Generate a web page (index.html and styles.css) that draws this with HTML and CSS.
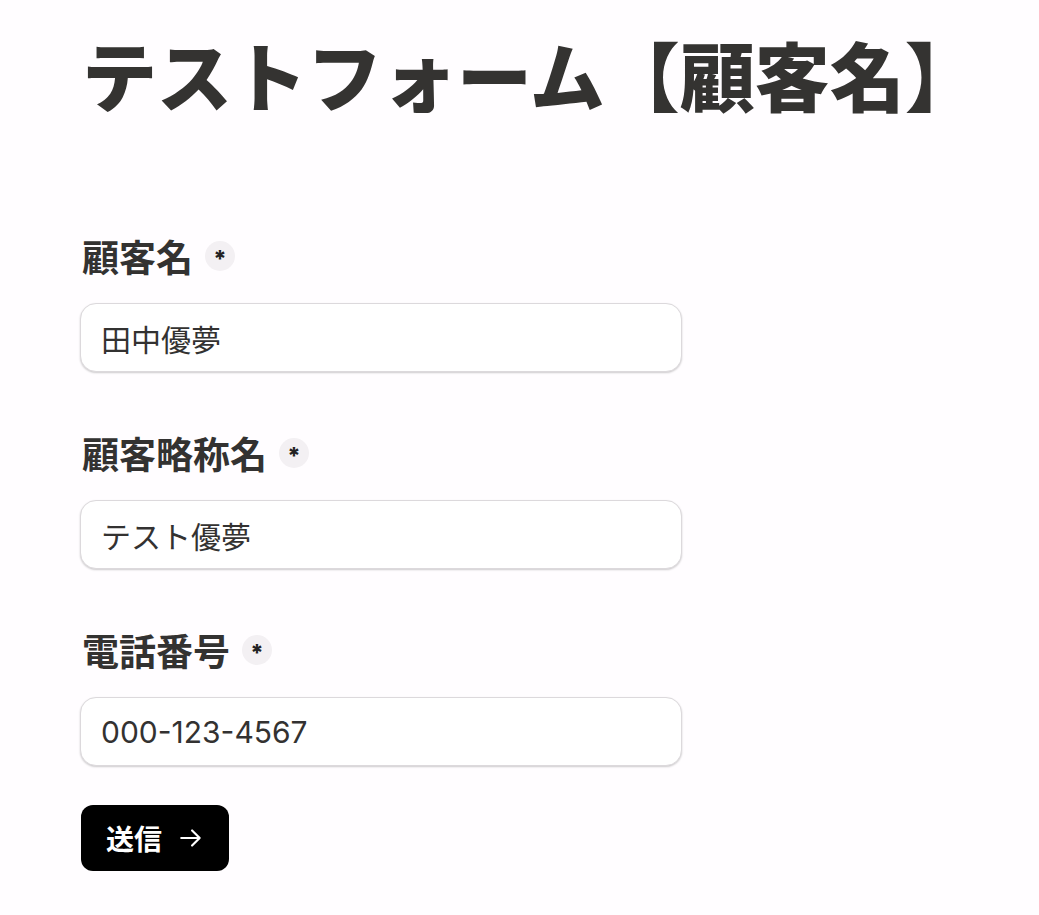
FILE: index.html
```html
<!DOCTYPE html>
<html lang="ja">
<head>
<meta charset="utf-8">
<link rel="stylesheet" href="styles.css">
</head>
<body>
<main class="page">
  <h1 class="title">テストフォーム【顧客名】</h1>
  <form class="form">
    <div class="field">
      <div class="label-row"><span class="label">顧客名</span><span class="req">*</span></div>
      <div class="input">田中優夢</div>
    </div>
    <div class="field">
      <div class="label-row"><span class="label">顧客略称名</span><span class="req">*</span></div>
      <div class="input">テスト優夢</div>
    </div>
    <div class="field">
      <div class="label-row"><span class="label">電話番号</span><span class="req">*</span></div>
      <div class="input">000-123-4567</div>
    </div>
    <button type="button" class="submit">送信
      <svg class="arrow" width="26" height="26" viewBox="0 0 24 24" fill="none" stroke="#fff" stroke-width="2" stroke-linecap="round" stroke-linejoin="round"><path d="M3 12h17M13 5l7 7-7 7"/></svg>
    </button>
  </form>
</main>
</body>
</html>
```
FILE: styles.css
```css
* { box-sizing: border-box; }
html, body { margin: 0; padding: 0; background: #fffdff; }
body {
  font-family: Inter, "Noto Sans CJK JP", sans-serif;
  color: #333231;
}
.page {
  padding: 24px 0 0 80px;
}
.title {
  margin: 0 0 0 2px;
  font-family: "Noto Sans CJK JP", sans-serif;
  font-size: 75px;
  font-weight: 900;
  line-height: 100px;
  color: #343331;
}
.form {
  margin-top: 112px;
  display: flex;
  flex-direction: column;
  width: 602px;
}
.field {
  display: flex;
  flex-direction: column;
  gap: 27px;
  margin-bottom: 61px;
}
.field:last-of-type { margin-bottom: 39px; }
.label-row {
  display: flex;
  align-items: center;
  gap: 12px;
  height: 40px;
  padding-left: 2px;
}
.label {
  font-family: "Noto Sans CJK JP", sans-serif;
  font-weight: 700;
  font-size: 37px;
  line-height: 40px;
  color: #333231;
}
.req {
  width: 30px;
  height: 30px;
  border-radius: 50%;
  background: #f3f0f3;
  display: flex;
  align-items: center;
  justify-content: center;
  font-family: Inter, sans-serif;
  font-weight: 800;
  font-size: 23px;
  line-height: 1;
  padding-top: 7px;
  color: #222;
}
.input {
  height: 69px;
  border: 1px solid #dcd9dc;
  border-radius: 16px;
  background: #fff;
  box-shadow: 0 1px 2px rgba(0,0,0,0.2);
  padding: 0 20px;
  display: flex;
  align-items: center;
  font-size: 30px;
  color: #333231;
}
.submit {
  align-self: flex-start;
  margin-left: 1px;
  width: 148px;
  height: 66px;
  border: none;
  border-radius: 12px;
  background: #000;
  color: #fff;
  display: flex;
  align-items: center;
  justify-content: center;
  gap: 16px;
  font-family: "Noto Sans CJK JP", sans-serif;
  font-weight: 700;
  font-size: 28px;
  padding: 0;
  cursor: pointer;
}
.arrow { display: block; }
```
